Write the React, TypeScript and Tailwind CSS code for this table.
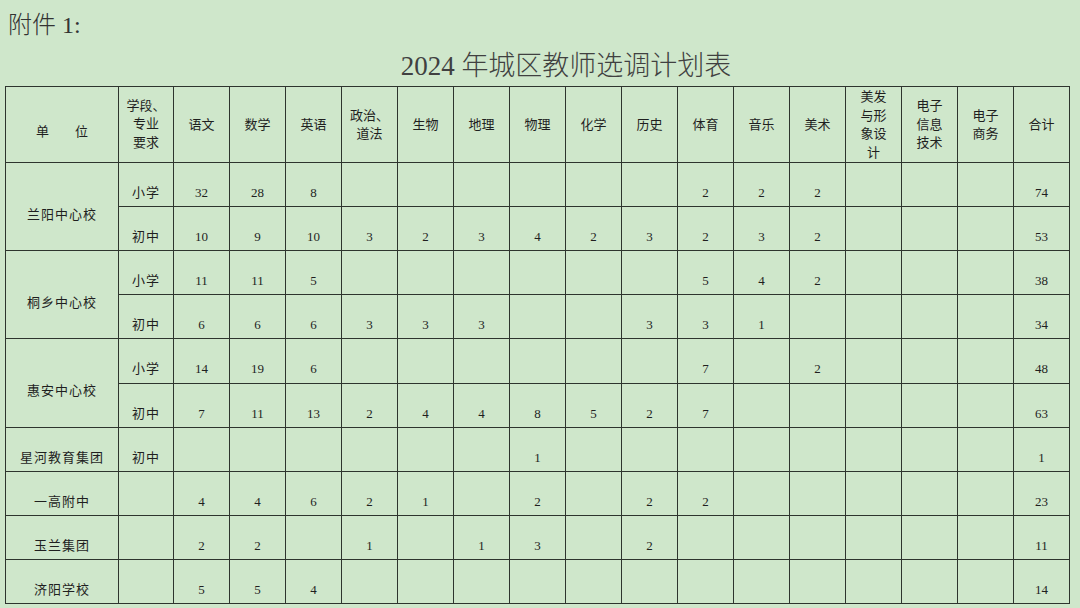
const subjects = [
  '语文',
  '数学',
  '英语',
  '政治、\n道法',
  '生物',
  '地理',
  '物理',
  '化学',
  '历史',
  '体育',
  '音乐',
  '美术',
  '美发\n与形\n象设\n计',
  '电子\n信息\n技术',
  '电子\n商务',
  '合计',
];

type Row = { unit?: string; span?: number; level: string; nums: (number | null)[] };

const _ = null;

const rows: Row[] = [
  { unit: '兰阳中心校', span: 2, level: '小学', nums: [32, 28, 8, _, _, _, _, _, _, 2, 2, 2, _, _, _, 74] },
  { level: '初中', nums: [10, 9, 10, 3, 2, 3, 4, 2, 3, 2, 3, 2, _, _, _, 53] },
  { unit: '桐乡中心校', span: 2, level: '小学', nums: [11, 11, 5, _, _, _, _, _, _, 5, 4, 2, _, _, _, 38] },
  { level: '初中', nums: [6, 6, 6, 3, 3, 3, _, _, 3, 3, 1, _, _, _, _, 34] },
  { unit: '惠安中心校', span: 2, level: '小学', nums: [14, 19, 6, _, _, _, _, _, _, 7, _, 2, _, _, _, 48] },
  { level: '初中', nums: [7, 11, 13, 2, 4, 4, 8, 5, 2, 7, _, _, _, _, _, 63] },
  { unit: '星河教育集团', span: 1, level: '初中', nums: [_, _, _, _, _, _, 1, _, _, _, _, _, _, _, _, 1] },
  { unit: '一高附中', span: 1, level: '', nums: [4, 4, 6, 2, 1, _, 2, _, 2, 2, _, _, _, _, _, 23] },
  { unit: '玉兰集团', span: 1, level: '', nums: [2, 2, _, 1, _, 1, 3, _, 2, _, _, _, _, _, _, 11] },
  { unit: '济阳学校', span: 1, level: '', nums: [5, 5, 4, _, _, _, _, _, _, _, _, _, _, _, _, 14] },
];

const rowHeights = [44, 44, 44, 44, 45, 44, 44, 44, 44, 44];

const cell = 'border border-[#2e352e] text-center';

export default function App() {
  return (
    <div
      className="w-[1080px] h-[608px] overflow-hidden bg-[#cfe7cb] text-[#1f1f1f]"
      style={{ fontFamily: '"Liberation Serif", "Noto Sans CJK SC", serif' }}
    >
      {/* 附件 */}
      <div className="pl-[8px] pt-[10px] h-[44px] text-[24px] leading-[30px] text-[#333] font-light">附件 1:</div>

      {/* Title */}
      <div className="h-[42px] flex items-start justify-center pt-[7px] pl-[52px] text-[27px] leading-[30px] text-[#404040] font-light">
        2024 年城区教师选调计划表
      </div>

      <table className="ml-[5px] w-[1065px] table-fixed border-collapse text-[13px]">
        <colgroup>
          <col className="w-[113px]" />
          <col className="w-[55px]" />
          {subjects.map((s) => (
            <col key={s} className="w-[56px]" />
          ))}
        </colgroup>
        <thead>
          <tr className="h-[75px]">
            <th className={`${cell} font-normal align-middle pt-[15px]`}>
              <span className="mr-[26px]">单</span>位
            </th>
            <th className={`${cell} font-normal align-middle leading-[18.5px] whitespace-pre-line`}>
              {'学段、\n专业\n要求'}
            </th>
            {subjects.map((s) => (
              <th key={s} className={`${cell} font-normal align-middle leading-[18.5px] whitespace-pre-line pt-[1px]`}>
                {s}
              </th>
            ))}
          </tr>
        </thead>
        <tbody>
          {rows.map((r, i) => (
            <tr key={i} style={{ height: rowHeights[i] }}>
              {r.unit && (
                <td rowSpan={r.span} className={`${cell} align-middle pt-[16px] tracking-[1px]`}>
                  {r.unit}
                </td>
              )}
              <td className={`${cell} align-middle pt-[16px] tracking-[1px]`}>{r.level}</td>
              {r.nums.map((n, j) => (
                <td key={j} className={`${cell} align-middle pt-[16px]`}>
                  {n ?? ''}
                </td>
              ))}
            </tr>
          ))}
        </tbody>
      </table>
    </div>
  );
}
